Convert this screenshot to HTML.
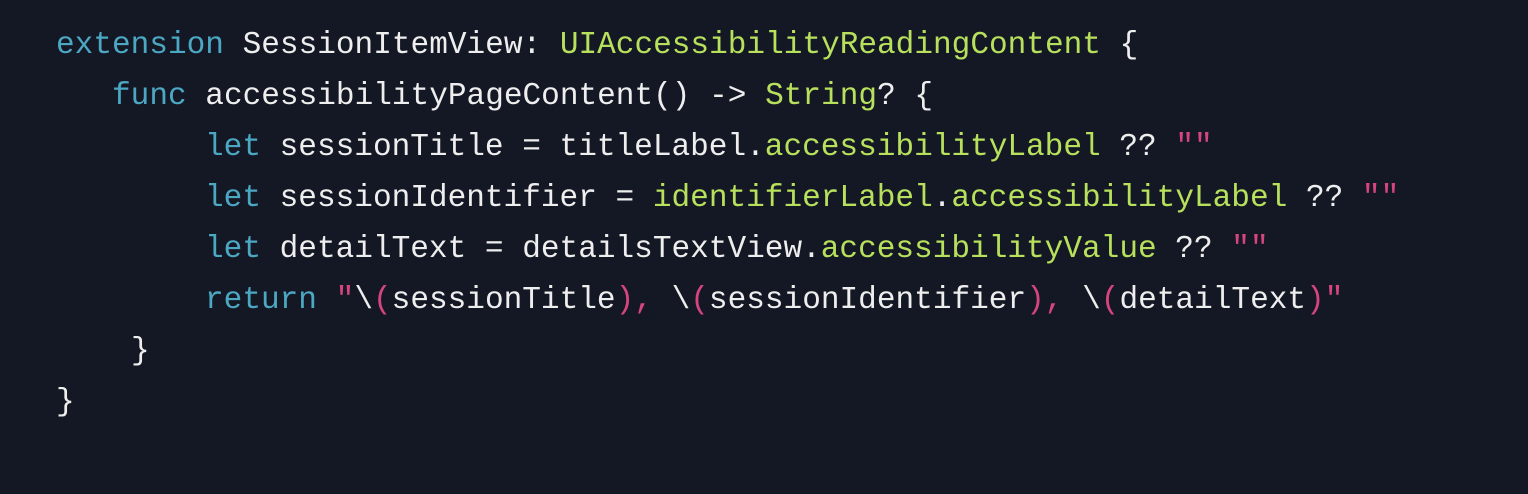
<!DOCTYPE html>
<html><head><meta charset="utf-8"><style>
html,body{margin:0;padding:0;}
body{width:1528px;height:494px;background:#141824;overflow:hidden;position:relative;font-family:"Liberation Mono",monospace;font-size:31.1px;color:#eeeeee;}
.l{position:absolute;white-space:pre;line-height:51px;height:51px;}
.k{color:#4ba7c2}.g{color:#b7e05c}.p{color:#d6457e}
</style></head><body>
<div class="l" style="left:56px;top:20px"><span class="k">extension</span> SessionItemView: <span class="g">UIAccessibilityReadingContent</span> {</div>
<div class="l" style="left:112px;top:71px"><span class="k">func</span> accessibilityPageContent() -&gt; <span class="g">String</span>? {</div>
<div class="l" style="left:205px;top:122px"><span class="k">let</span> sessionTitle = titleLabel.<span class="g">accessibilityLabel</span> ?? <span class="p">""</span></div>
<div class="l" style="left:205px;top:173px"><span class="k">let</span> sessionIdentifier = <span class="g">identifierLabel</span>.<span class="g">accessibilityLabel</span> ?? <span class="p">""</span></div>
<div class="l" style="left:205px;top:224px"><span class="k">let</span> detailText = detailsTextView.<span class="g">accessibilityValue</span> ?? <span class="p">""</span></div>
<div class="l" style="left:205px;top:275px"><span class="k">return</span> <span class="p">"</span>\<span class="p">(</span>sessionTitle<span class="p">), </span>\<span class="p">(</span>sessionIdentifier<span class="p">), </span>\<span class="p">(</span>detailText<span class="p">)"</span></div>
<div class="l" style="left:131px;top:326px">}</div>
<div class="l" style="left:56px;top:377px">}</div>
</body></html>
